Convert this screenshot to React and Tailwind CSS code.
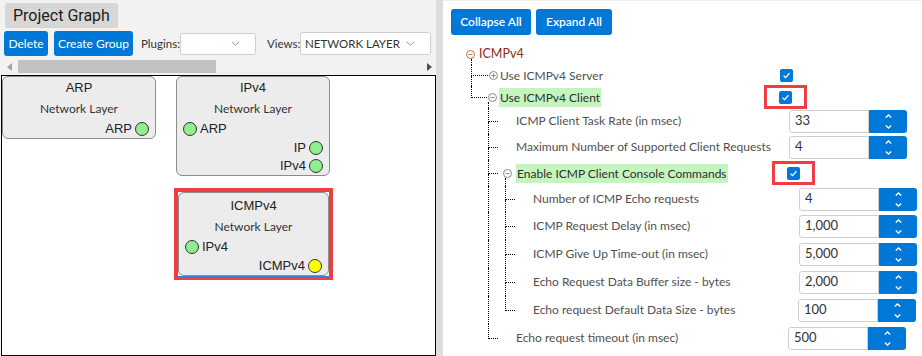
import React from 'react';

const BLUE = 'bg-[#0078d7]';

const Check = () => (
  <span className={`flex h-[13px] w-[13px] items-center justify-center rounded-[2px] ${BLUE}`}>
    <svg width="9" height="9" viewBox="0 0 9 9">
      <path d="M1.6 4.7 L3.6 6.6 L7.5 2.3" fill="none" stroke="white" strokeWidth="1.3" />
    </svg>
  </span>
);

const Toggle = ({ open, color = '#7a7a7a' }) => (
  <svg width="9" height="9" viewBox="0 0 9 9" className="block">
    <circle cx="4.5" cy="4.5" r="4" fill="none" stroke={color} strokeWidth="0.9" />
    <path d="M2.4 4.5h4.2" stroke={color} strokeWidth="0.9" />
    {!open && <path d="M4.5 2.4v4.2" stroke={color} strokeWidth="0.9" />}
  </svg>
);

const Spin = () => (
  <div className={`flex w-[38px] flex-col items-center justify-center gap-[7px] rounded-r-[3px] ${BLUE}`}>
    <svg width="7" height="4" viewBox="0 0 7 4">
      <path d="M0.8 3.4 L3.5 0.9 L6.2 3.4" fill="none" stroke="white" strokeWidth="1.3" />
    </svg>
    <svg width="7" height="4" viewBox="0 0 7 4">
      <path d="M0.8 0.6 L3.5 3.1 L6.2 0.6" fill="none" stroke="white" strokeWidth="1.3" />
    </svg>
  </div>
);

const NumberField = ({ value }) => (
  <div className="flex h-[23px]">
    <div className="flex w-[80px] items-center rounded-l-[3px] border border-[#cfcfcf] bg-white pl-[5px] text-[13px] text-[#333]">
      {value}
    </div>
    <Spin />
  </div>
);

const Marked = () => (
  <div className="flex h-[24px] w-[43px] shrink-0 items-center justify-center border-[3px] border-[#ef3e42]">
    <Check />
  </div>
);

// tree connector: vertical from top, horizontal at middle, vertical continues unless last
const Connector = ({ className, last }) => (
  <div className={`flex shrink-0 flex-col ${className}`}>
    <div className="flex-1 border-b border-l border-dotted border-black" />
    <div className={`flex-1 ${last ? '' : 'border-l border-dotted border-black'}`} />
  </div>
);

const Slot = ({ className, iconClass, lineClass, icon, child, color }) => (
  <div className={`flex shrink-0 flex-col ${className}`}>
    <div className="flex-1" />
    {icon && (
      <div className={iconClass}>
        <Toggle open={icon === 'minus'} color={color} />
      </div>
    )}
    <div className={`flex-1 ${child ? lineClass : ''}`} />
  </div>
);

const Label = ({ text, hl }) =>
  hl ? (
    <span className="whitespace-nowrap bg-[#c5f5bf] px-[1px] leading-[19px] text-[#2e2e2e]">{text}</span>
  ) : (
    <span className="whitespace-nowrap text-[#505050]">{text}</span>
  );

const Port = ({ label, side, yellow }) => {
  const dot = (
    <span
      className={`h-[14px] w-[14px] rounded-full border border-[#333] ${yellow ? 'bg-[#ffff00]' : 'bg-[#90ee90]'}`}
    />
  );
  return side === 'left' ? (
    <div className="flex h-[18.5px] items-center gap-[3px] pl-[6px]">
      {dot}
      <span>{label}</span>
    </div>
  ) : (
    <div className="flex h-[18.5px] items-center justify-end gap-[3px] pr-[6px]">
      <span>{label}</span>
      {dot}
    </div>
  );
};

const Node = ({ title, ports, className }) => (
  <div
    className={`flex flex-col rounded-[6px] border border-[#8c8c8c] bg-[#ececec] font-['Liberation_Sans',Arial,sans-serif] text-[13px] text-[#222] ${className}`}
  >
    <div className="flex h-[21px] items-center justify-center">{title}</div>
    <div className="flex h-[22px] items-center justify-center font-['Lato',sans-serif] text-[12px] text-[#333]">
      Network Layer
    </div>
    {ports.map((p) => (
      <Port key={p.label + p.side} {...p} />
    ))}
  </div>
);

const Chevron = () => (
  <svg width="9" height="5" viewBox="0 0 9 5">
    <path d="M0.8 0.8 L4.5 4.2 L8.2 0.8" fill="none" stroke="#8796aa" strokeWidth="1" />
  </svg>
);

const GraphPanel = () => (
  <div className="flex w-[436px] shrink-0 flex-col bg-[#f2f2f2]">
    {/* Tab */}
    <div className="flex pl-[5px] pt-[3px]">
      <div className="flex h-[25px] items-center rounded-t-[3px] bg-[#d7d7d7] px-[8px] font-['Roboto',sans-serif] text-[16px] text-[#1c1c1c]">
        Project Graph
      </div>
    </div>

    {/* Toolbar */}
    <div className="mt-[3px] flex h-[25px] items-center whitespace-nowrap pl-[4px] text-[12px]">
      <button className={`h-[25px] w-[44px] rounded-[3px] ${BLUE} text-white`}>Delete</button>
      <button className={`ml-[6px] h-[25px] w-[79px] rounded-[3px] ${BLUE} text-white`}>Create Group</button>
      <span className="ml-[8px] w-[39px] text-[11.5px] text-[#333]">Plugins:</span>
      <div className="flex h-[22px] w-[76px] items-center justify-end rounded-[3px] border border-[#cfcfcf] bg-white pr-[15px]">
        <Chevron />
      </div>
      <span className="ml-[11px] w-[33px] text-[11.5px] text-[#333]">Views:</span>
      <div className="flex h-[23px] w-[131px] items-center justify-between rounded-[3px] border border-[#cfcfcf] bg-white pl-[4px] pr-[15px] text-[11.5px] text-[#333]">
        <span>NETWORK LAYER</span>
        <Chevron />
      </div>
    </div>

    {/* Horizontal scrollbar */}
    <div className="mt-[3px] flex h-[17px] items-center">
      <span className="ml-[7px] h-0 w-0 border-y-[4px] border-r-[5px] border-y-transparent border-r-[#a3a3a3]" />
      <div className="ml-[6px] h-[13px] w-[198px] bg-[#c1c1c1]" />
      <div className="flex-1" />
      <span className="mr-[4px] h-0 w-0 border-y-[4px] border-l-[5px] border-y-transparent border-l-[#505050]" />
    </div>

    {/* Canvas */}
    <div className="relative ml-[1px] h-[300px] border border-black bg-white">
      <div className="absolute left-0 top-0">
        <Node className="w-[154px]" title="ARP" ports={[{ label: 'ARP', side: 'right' }]} />
      </div>
      <div className="absolute left-[174px] top-0">
        <Node
          className="w-[154px]"
          title="IPv4"
          ports={[
            { label: 'ARP', side: 'left' },
            { label: 'IP', side: 'right' },
            { label: 'IPv4', side: 'right' },
          ]}
        />
      </div>
      <div className="absolute left-[172px] top-[112px] border-[3px] border-[#ef3e42]">
        <div className="border border-[#2f7fd8]">
          <Node
            className="w-[151px] pt-[2px]"
            title="ICMPv4"
            ports={[
              { label: 'IPv4', side: 'left' },
              { label: 'ICMPv4', side: 'right', yellow: true },
            ]}
          />
        </div>
      </div>
    </div>
  </div>
);

const ConfigPanel = () => (
  <div className="flex flex-1 flex-col border-t border-[#efefef] bg-white text-[12px]">
    <div className="flex gap-[5px] pl-[8px] pt-[8px] text-[12px] font-semibold text-white">
      <button className={`h-[26px] w-[80px] rounded-[3px] ${BLUE}`}>Collapse All</button>
      <button className={`h-[26px] w-[76px] rounded-[3px] ${BLUE}`}>Expand All</button>
    </div>

    <div className="mt-[8px] flex flex-col">
      {/* ICMPv4 root */}
      <div className="flex h-[22px] items-stretch">
        <div className="w-[23px] shrink-0" />
        <Slot
          className="w-[13px]"
          icon="minus"
          child
          color="#b8603e"
          lineClass="ml-[5px] border-l border-dotted border-black"
        />
        <span className="flex items-center text-[12.5px] text-[#8f2a20]">ICMPv4</span>
      </div>

      {/* Use ICMPv4 Server */}
      <div className="flex h-[21px] items-stretch">
        <div className="flex w-[337px] shrink-0">
          <div className="w-[28px] shrink-0" />
          <Connector className="w-[17px]" />
          <Slot className="w-[12px]" iconClass="ml-[1px]" icon="plus" />
          <div className="flex items-center">
            <Label text="Use ICMPv4 Server" />
          </div>
        </div>
        <div className="flex items-center">
          <Check />
        </div>
      </div>

      {/* Use ICMPv4 Client */}
      <div className="flex h-[22px] items-stretch">
        <div className="flex w-[321px] shrink-0">
          <div className="w-[28px] shrink-0" />
          <Connector className="w-[16px]" last />
          <Slot
            className="w-[12px]"
            iconClass="ml-[1px]"
            icon="minus"
            child
            lineClass="ml-[1px] border-l border-dotted border-black"
          />
          <div className="flex items-center">
            <Label text="Use ICMPv4 Client" hl />
          </div>
        </div>
        <div className="flex items-center">
          <Marked />
        </div>
      </div>

      {/* Level 2 leaf rows */}
      {[
        { text: 'ICMP Client Task Rate (in msec)', value: '33' },
        { text: 'Maximum Number of Supported Client Requests', value: '4' },
      ].map((r) => (
        <div key={r.text} className="flex h-[26px] items-stretch">
          <div className="flex w-[346px] shrink-0">
            <div className="w-[45px] shrink-0" />
            <Connector className="w-[10px]" />
            <div className="w-[18px] shrink-0" />
            <div className="flex items-center">
              <Label text={r.text} />
            </div>
          </div>
          <div className="flex items-center">
            <NumberField value={r.value} />
          </div>
        </div>
      ))}

      {/* Enable ICMP Client Console Commands */}
      <div className="flex h-[26px] items-stretch">
        <div className="flex w-[329px] shrink-0">
          <div className="w-[45px] shrink-0" />
          <Connector className="w-[10px]" />
          <Slot
            className="w-[18px]"
            iconClass="ml-[5px]"
            icon="minus"
            child
            lineClass="ml-[7px] border-l border-dotted border-black"
          />
          <div className="flex items-center">
            <Label text="Enable ICMP Client Console Commands" hl />
          </div>
        </div>
        <div className="flex items-center">
          <Marked />
        </div>
      </div>

      {/* Level 3 rows */}
      {[
        { text: 'Number of ICMP Echo requests', value: '4', h: 'h-[26px]', w: 'w-[356px]' },
        { text: 'ICMP Request Delay (in msec)', value: '1,000', h: 'h-[28px]', w: 'w-[356px]' },
        { text: 'ICMP Give Up Time-out (in msec)', value: '5,000', h: 'h-[28px]', w: 'w-[356px]' },
        { text: 'Echo Request Data Buffer size - bytes', value: '2,000', h: 'h-[28px]', w: 'w-[356px]' },
        { text: 'Echo request Default Data Size - bytes', value: '100', h: 'h-[28px]', w: 'w-[355px]', last: true },
      ].map((r) => (
        <div key={r.text} className={`flex items-stretch ${r.h}`}>
          <div className={`flex shrink-0 ${r.w}`}>
            <div className="w-[45px] shrink-0" />
            <div className="w-[17px] shrink-0 border-l border-dotted border-black" />
            <Connector className="w-[10px]" last={r.last} />
            <div className="w-[18px] shrink-0" />
            <div className="flex items-center">
              <Label text={r.text} />
            </div>
          </div>
          <div className="flex items-center">
            <NumberField value={r.value} />
          </div>
        </div>
      ))}

      {/* Echo request timeout */}
      <div className="flex h-[28px] items-stretch">
        <div className="flex w-[345px] shrink-0">
          <div className="w-[45px] shrink-0" />
          <Connector className="w-[10px]" last />
          <div className="w-[18px] shrink-0" />
          <div className="flex items-center">
            <Label text="Echo request timeout (in msec)" />
          </div>
        </div>
        <div className="flex items-center">
          <NumberField value="500" />
        </div>
      </div>
    </div>
  </div>
);

export default function App() {
  return (
    <div className="flex h-[356px] w-[922px] overflow-hidden bg-white font-['Lato',sans-serif]">
      <GraphPanel />
      <div className="w-[7px] shrink-0 bg-[#e1dcdc]" />
      <ConfigPanel />
    </div>
  );
}
